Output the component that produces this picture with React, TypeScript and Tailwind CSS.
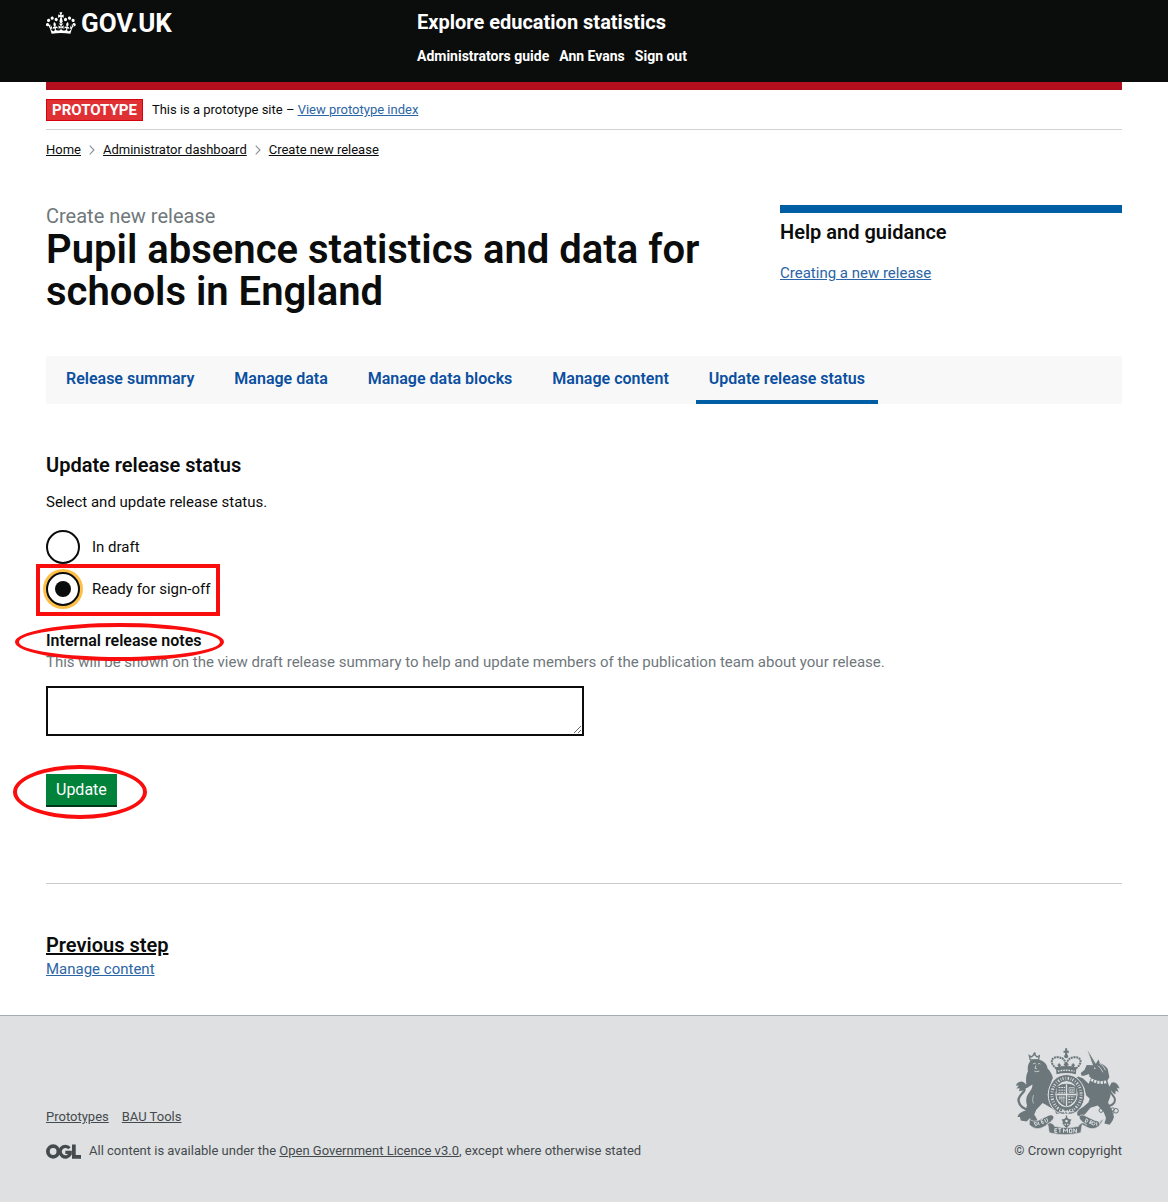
import React from 'react';

const tabs = [
  'Release summary',
  'Manage data',
  'Manage data blocks',
  'Manage content',
  'Update release status',
];

function CrownIcon() {
  return (
    <svg aria-hidden="true" viewBox="0 3.6 36 24.6" preserveAspectRatio="none" className="h-[22px] w-[30px] fill-white">
      <path d="M6.7 12.2c1 .4 2.1-.1 2.5-1s-.1-2.1-1-2.5c-1-.4-2.1.1-2.5 1-.4 1 0 2.1 1 2.5m-4.3 2.5c1 .4 2.1-.1 2.5-1s-.1-2.1-1-2.5c-1-.4-2.1.1-2.5 1-.5 1 0 2.1 1 2.5m-1.3 4.8c1 .4 2.1-.1 2.5-1s-.1-2.1-1-2.5c-1-.4-2.1.1-2.5 1-.4 1 0 2.1 1 2.5m10.4-5.8c1 .4 2.1-.1 2.5-1s-.1-2.1-1-2.5c-1-.4-2.1.1-2.5 1s0 2.1 1 2.5m17.4-1.5c-1 .4-2.1-.1-2.5-1s.1-2.1 1-2.5c1-.4 2.1.1 2.5 1 .5 1 0 2.1-1 2.5m4.3 2.5c-1 .4-2.1-.1-2.5-1s.1-2.1 1-2.5c1-.4 2.1.1 2.5 1 .5 1 0 2.1-1 2.5m1.3 4.8c-1 .4-2.1-.1-2.5-1s.1-2.1 1-2.5c1-.4 2.1.1 2.5 1 .4 1 0 2.1-1 2.5m-10.4-5.8c-1 .4-2.1-.1-2.5-1s.1-2.1 1-2.5c1-.4 2.1.1 2.5 1s0 2.1-1 2.5m-5.3-4.8 2.4 1.3V6.5l-2.4.8c-.1-.1-.1-.2-.2-.3s1-3 1-3h-3.4l1 3c-.1.1-.2.2-.2.3-.1.1-2.4-.8-2.4-.8v3.7L17 8.9c.1.1.2.2.4.3l-1.1 4.2c-.1.2-.1.4-.1.6 0 1.1.8 2 1.8 2.1h.2c1 0 1.8-1 1.8-2.1 0-.2 0-.4-.1-.6l-1.1-4.2c.2-.1.3-.2.4-.3M18 27.1c4 0 7.8.3 11.3.8.9-3.5 2.2-6.5 4-9.5l-2.6-.9c.3 1.5.3 2.3 0 3.5-.4-.4-.8-1.1-1.1-2.3l-1.2 4.1c.7-.5 1.3-.8 2-.8-1.1 2.6-2.7 3.1-3.5 3-1.1-.2-1.7-1.2-1.4-2.1.2-1.2 1.5-1.5 2-.1 1.1-2.3-.8-3-2-2.3 1.9-1.9 2.2-3.6.6-5.7-2.2 1.7-2.2 3.3-1.2 5.6-1.5-1.4-3.4-.6-2.5 1.7 1.1-1.4 2.1-.4 2 .8-.2 1-1.8 1.7-3.5 1.5-2.4-.2-2.5-1.9-2.6-3.3.6-.1 1.7.5 2.6 1.7l.3-4.5c-1 1.1-2 1.4-3 1.4.4-1.1 2.7-3.2 2.7-3.2h-5.7s2.3 2 2.7 3.2c-1 0-2-.2-3-1.4l.3 4.5c.9-1.2 2-1.8 2.6-1.7-.1 1.4-.1 3.1-2.6 3.3-1.7.1-3.4-.5-3.5-1.5-.2-1.2.9-2.2 2-.8.8-2.3-1-3.1-2.5-1.7 1-2.3 1-4-1.3-5.6-1.6 2.1-1.3 3.8.6 5.7-1.2-.7-3.1-.1-2 2.3.6-1.4 1.8-1.1 2.1.1.2.9-.3 1.9-1.4 2.1-.8.1-2.4-.4-3.5-3 .7 0 1.3.3 2 .8l-1.2-4.1c-.3 1.1-.7 1.8-1.1 2.3-.3-1.2-.2-2 0-3.5l-2.6.9c1.7 3 3 6 4 9.5 3.4-.5 7.2-.8 11.2-.8" />
    </svg>
  );
}

function Chevron() {
  return (
    <svg aria-hidden="true" viewBox="0 0 6 10" className="h-[10px] w-[6px] fill-none stroke-[#8a8f94]">
      <path d="M.7.7 5 5 .7 9.3" strokeWidth="1.1" />
    </svg>
  );
}

function OglLogo() {
  return (
    <svg role="img" aria-label="Open Government Licence" viewBox="0 0 103 43" className="h-[15px] w-[35px] shrink-0 fill-none stroke-[#454a4d]">
      <circle cx="21" cy="21.5" r="15.5" strokeWidth="11" />
      <path d="M69 12A15.5 15.5 0 1 0 71 29V24H57" strokeWidth="10" />
      <path d="M82 1V37H103" strokeWidth="11" />
    </svg>
  );
}

/* Royal coat of arms: lion and unicorn around a crowned garter and shield. */
function Crest() {
  const g = '#6b777b';
  const bg = '#dee0e2';
  return (
    <svg aria-hidden="true" viewBox="15 18 317 262" className="h-[87px] w-[106px]" fill={g} stroke="none">
      {/* lion */}
      <path d="M60 54 57 41l7 4 8-9 8 9 7-4-2 13Z" fill={bg} stroke={g} strokeWidth="4" />
      <path d="M73 31v8M69 34h8" stroke={g} strokeWidth="3" />
      <path d="M60 56c10-4 24-4 34 0 10 5 17 14 18 24 8 8 14 18 16 28-6 12-9 22-9 34l-7 17c10 11 25 21 34 31l8 23-14 8-7-16-25-15-11-6-19 20-8 19-13 8-8 8-18-3-2-10-8 0 5-10 11-7 9-3 4-16c-4-15-3-27 7-39 6-8 11-16 9-23l-15 10-9 2 6-14c-2-14 0-30 5-37-2-10-1-23 7-32Z" />
      <path d="M68 67c3-4 7-4 9 0M83 67c3-3 6-3 8 0M77 71l-3 8 6 2M72 87c5 3 10 3 15 0" fill="none" stroke={bg} strokeWidth="2.5" />
      <path d="M70 160c-4 9-4 18 0 25" fill="none" stroke={bg} strokeWidth="2" />
      <path d="M58 205C45 203 29 196 25 179 21 164 38 155 42 146c3-9-6-16-15-11" fill="none" stroke={g} strokeWidth="7" strokeLinecap="round" />
      <path d="M42 123c-8-7-16-4-23 3l-2 6 9-1-8 9 10-1-2 9c11 0 20-5 21-13 1-6-1-9-5-12Z" />
      <path d="M62 214l12 7 8 15-12 7-11-8Z" />
      {/* unicorn */}
      <path d="m232 24 26 43-8 5Z" />
      <path d="M234 30 256 68" stroke={bg} strokeWidth="1.5" strokeDasharray="2 5" />
      <path d="m248 70 10-5 7-12 5 11c10 3 17 9 23 17l5 24-6 12 6 18c6 10 6 20 2 31l-6 16 11 21 7 22-4 11-9 13-16-4 5-16-7-18-18-20-22 7-17 20-13 7-12-6 5-14 16-10 15-13 4-11-11-11-6-24-18-12-8-12 8-8 14 5 18 17 6-17-6-13c-9 3-16 7-22 5l-2-8 11-9 7-15Z" />
      <circle cx="254" cy="79" r="2.5" fill={bg} />
      <path d="M235 107c17 14 38 18 55 12" fill="none" stroke={bg} strokeWidth="9" strokeDasharray="7 3" />
      <path d="M236 102c16 12 36 16 54 11" fill="none" stroke={g} strokeWidth="2" />
      <path d="M268 64c9 5 14 12 18 21M264 71c7 7 12 13 14 20" fill="none" stroke={bg} strokeWidth="2.5" />
      <path d="M290 192c14 2 25-7 25-19 0-10-15-17-16-30-1-9 6-15 15-10" fill="none" stroke={g} strokeWidth="6" strokeLinecap="round" />
      <path d="M304 123c9-6 20 1 25 17l-8-2 5 13-9-5-1 12c-9-4-15-13-17-23Z" />
      <g fill="none" stroke={g} strokeWidth="3">
        <circle cx="273" cy="206" r="6" />
        <circle cx="284" cy="201" r="6" />
        <circle cx="294" cy="208" r="6" />
        <circle cx="304" cy="213" r="6" />
        <circle cx="318" cy="207" r="7" />
        <circle cx="308" cy="203" r="5" />
      </g>
      {/* crown */}
      <path d="M168 19v22M160 29h16" stroke={g} strokeWidth="6" />
      <circle cx="168" cy="43" r="6" />
      <path d="M139 80C115 62 124 43 145 46c13 2 22 6 23 34 1-28 10-32 23-34 21-3 30 16 6 34" fill="none" stroke={g} strokeWidth="6" strokeDasharray="6 2" />
      <path d="M137 76c20-5 42-5 62 0l-2 21c-19-5-39-5-58 0Z" />
      <path d="M143 88c17-4 33-4 50 0" fill="none" stroke={bg} strokeWidth="4" strokeDasharray="5 3" />
      <path d="M168 61v14M161 68h14M147 65v10M142 70h10M189 65v10M184 70h10" stroke={g} strokeWidth="5" />
      {/* garter */}
      <ellipse cx="169" cy="159" rx="55" ry="61" stroke={bg} strokeWidth="3" />
      <ellipse cx="169" cy="159" rx="44" ry="50" fill="none" stroke={bg} strokeWidth="9" strokeDasharray="2 5 4 5 2 4 3 6" />
      <ellipse cx="169" cy="157" rx="35" ry="41" fill={bg} stroke={g} strokeWidth="3" />
      {/* quartered shield */}
      <path d="M139 136c18-14 42-14 60 0v22c0 18-13 31-30 36-17-5-30-18-30-36Z" fill={g} />
      <path d="M145 137h20M145 145h20M145 153h20M174 165h19M174 173h17M174 181h12" stroke={bg} strokeWidth="3" strokeDasharray="6 2" />
      <path d="M177 137h15v15h-15ZM181 142h7v6h-7ZM149 162v13M155 162v19M161 162v23M145 168h20" fill="none" stroke={bg} strokeWidth="2" />
      <path d="M169 127v66M139 158h60" stroke={bg} strokeWidth="4" />
      <path d="M146 210h46M157 202l9 15M181 202l-9 15" stroke={bg} strokeWidth="3" />
      {/* motto ribbon */}
      <path d="M57 232c10 8 20 8 33 1l25-12c12-5 20 3 13 12l-9 10c8 2 13 6 14 11 24 5 48 5 72 0 1-5 6-9 14-11l-9-10c-7-9 1-17 13-12l25 12c13 7 23 7 33-1l-10 17c-14 15-30 15-47 4l-8-4-4 24c-31 8-65 8-95 0l-4-24-8 4c-17 11-33 11-48-4Z" stroke={bg} strokeWidth="2" />
      <path d="M119 243c-7 3-10 5-10 8M219 243c7 3 10 5 10 8" fill="none" stroke={bg} strokeWidth="3" />
      {/* fleur between the ribbons */}
      <path d="M134 234c8-7 6-15 0-18h70c-6 3-8 11 0 18l-8 17h-54Z" fill={bg} />
      <path d="M169 221v34M160 248l9 8 9-8" fill="none" stroke={g} strokeWidth="4" />
      <path d="m169 226 7 6 8 1-4 7 1 8-12-3-12 3 1-8-4-7 8-1Z" />
      <circle cx="169" cy="238" r="4" fill={bg} />
      <g fill="none" stroke={bg} strokeWidth="3">
        <path d="m72 242 4 10c7-1 8-10-4-10M83 240l4 10M92 236l4 10M92 236l6-3M94 241l5-2M96 246l6-3M103 232l3 8c2 4 8 1 6-3l-3-8" />
        <path d="M141 261h-7v12h7M134 267h6M144 261h9M149 261v12M160 273v-12l6 8 6-8v12M178 262h7v11h-7ZM191 273v-12l8 12v-12" />
        <path d="m229 231-4 10c7 3 12-7 4-10M238 246l4-10c8 3 5 7-2 6l4 6M250 241c7-1 6 9 0 9s-6-8 0-9M260 242v10M264 240h9M269 240l1 10" />
      </g>
    </svg>
  );
}

function RedEllipse({ className }: { className: string }) {
  return <span aria-hidden="true" className={`pointer-events-none absolute rounded-[50%] border-4 border-[#f90d0d] ${className}`} />;
}

const radio =
  "grid size-[34px] shrink-0 appearance-none place-content-center rounded-full border-2 border-[#0b0c0c] bg-white outline-none checked:ring-3 checked:ring-[#ffbf47] checked:before:size-4 checked:before:rounded-full checked:before:bg-[#0b0c0c] checked:before:content-['']";

export default function App() {
  return (
    <div className="bg-white font-[Roboto,sans-serif] text-[15px] leading-5 text-[#0b0c0c]">
      <header className="bg-[#0b0c0c] px-[46px] text-white">
        <div className="grid grid-cols-[371px_1fr] pt-[7px] pb-4">
          <a href="#" className="flex h-8 items-center gap-[5px] self-start text-[26px] font-bold">
            <CrownIcon />
            <span>GOV.UK</span>
          </a>
          <div>
            <a href="#" className="block pt-px text-xl leading-7 font-bold">
              Explore education statistics
            </a>
            <nav className="mt-[10px] flex gap-[10px] text-[14px] font-bold">
              <a href="#">Administrators guide</a>
              <a href="#">Ann Evans</a>
              <a href="#">Sign out</a>
            </nav>
          </div>
        </div>
      </header>

      <div className="mx-[46px]">
        <div className="h-2 bg-[#b10e1e]" />
        <div className="flex items-center gap-[9px] border-b border-[#d0d2d4] pt-[9px] pb-2 text-[13px]">
          <strong className="border border-[#d8000c] bg-[#df3034] px-[5px] pt-px text-[15px] leading-[19px] font-bold text-white">PROTOTYPE</strong>
          <span>
            This is a prototype site – <a href="#" className="text-[#2b65a5] underline">View prototype index</a>
          </span>
        </div>
        <nav aria-label="Breadcrumb" className="mt-[10px]">
          <ol className="flex items-center gap-2 text-[13px]">
            <li><a href="#" className="underline">Home</a></li>
            <li><Chevron /></li>
            <li><a href="#" className="underline">Administrator dashboard</a></li>
            <li><Chevron /></li>
            <li><a href="#" className="underline">Create new release</a></li>
          </ol>
        </nav>

        <main>
          <div className="mt-[45px] grid grid-cols-3 gap-[25px]">
            <h1 className="col-span-2 text-[40px] leading-[42px] font-semibold">
              <span className="block pb-[2px] text-xl leading-[22px] font-normal text-[#6f777b]">Create new release</span>
              Pupil absence statistics and data for schools in England
            </h1>
            <aside className="border-t-8 border-[#005ea5]">
              <h2 className="mt-[7px] text-xl leading-6 font-semibold">Help and guidance</h2>
              <a href="#" className="mt-[19px] block w-fit text-[#2b65a5] underline">Creating a new release</a>
            </aside>
          </div>

          <nav aria-label="Release" className="mt-[43px] flex gap-[14px] bg-[#f8f8f8] pl-[7px]">
            {tabs.map((tab, i) => (
              <a
                key={tab}
                href="#"
                aria-current={i === tabs.length - 1 ? 'page' : undefined}
                className={`border-b-4 px-[13px] pt-[13px] pb-[11px] text-base leading-5 font-semibold text-[#0b4fa0] ${i === tabs.length - 1 ? 'border-[#005ea5]' : 'border-transparent'}`}
              >
                {tab}
              </a>
            ))}
          </nav>

          <form onSubmit={(e) => e.preventDefault()}>
            <fieldset>
              <legend className="pt-[49px] text-xl leading-6 font-semibold">Update release status</legend>
              <p className="mt-[15px]">Select and update release status.</p>
              <div className="mt-[18px] flex items-center gap-3">
                <input type="radio" id="draft" name="status" className={radio} />
                <label htmlFor="draft">In draft</label>
              </div>
              <div className="relative mt-2 flex w-fit items-center gap-3">
                <input type="radio" id="ready" name="status" defaultChecked className={radio} />
                <label htmlFor="ready">Ready for sign-off</label>
                <span aria-hidden="true" className="pointer-events-none absolute -inset-x-[10px] -top-2 -bottom-[10px] border-4 border-[#f90d0d]" />
              </div>
            </fieldset>

            <div className="relative mt-[25px]">
              <p id="notes-hint" className="absolute top-[21px] left-0 text-[#6f777b]">
                This will be shown on the view draft release summary to help and update members of the publication team about your release.
              </p>
              <div className="relative w-fit">
                <RedEllipse className="-top-2 -right-[22px] -bottom-[10px] -left-[31px] bg-white" />
                <label htmlFor="notes" className="relative block text-base leading-5 font-semibold">Internal release notes</label>
              </div>
              <textarea id="notes" aria-describedby="notes-hint" className="mt-[35px] block h-[50px] w-1/2 resize border-2 border-[#0b0c0c] p-1" />
            </div>

            <div className="relative mt-[38px] w-fit">
              <button type="submit" className="block bg-[#00823b] px-[10px] pt-[6px] pb-[7px] text-base leading-5 text-white shadow-[inset_0_-2px_0_#003618]">Update</button>
              <RedEllipse className="-top-[9px] -right-[30px] -bottom-[12px] -left-[33px]" />
            </div>
          </form>

          <hr className="mt-[76px] border-[#c8cacc]" />

          <a href="#" className="mt-[49px] block w-fit">
            <span className="block text-xl leading-6 font-semibold underline">Previous step</span>
            <span className="mt-[2px] block text-[#2b65a5] underline">Manage content</span>
          </a>
        </main>
      </div>

      <footer className="mt-9 flex items-end justify-between border-t border-[#a1acb2] bg-[#dee0e2] px-[46px] pt-8 pb-[43px] text-[13px] text-[#454a4d]">
        <div>
          <div className="flex gap-[13px]">
            <a href="#" className="underline">Prototypes</a>
            <a href="#" className="underline">BAU Tools</a>
          </div>
          <div className="mt-[14px] flex items-center gap-2">
            <OglLogo />
            <span>
              All content is available under the <a href="#" className="underline">Open Government Licence v3.0</a>, except where otherwise stated
            </span>
          </div>
        </div>
        <a href="#" className="flex flex-col items-center gap-[6px]">
          <Crest />
          <span>© Crown copyright</span>
        </a>
      </footer>
    </div>
  );
}
